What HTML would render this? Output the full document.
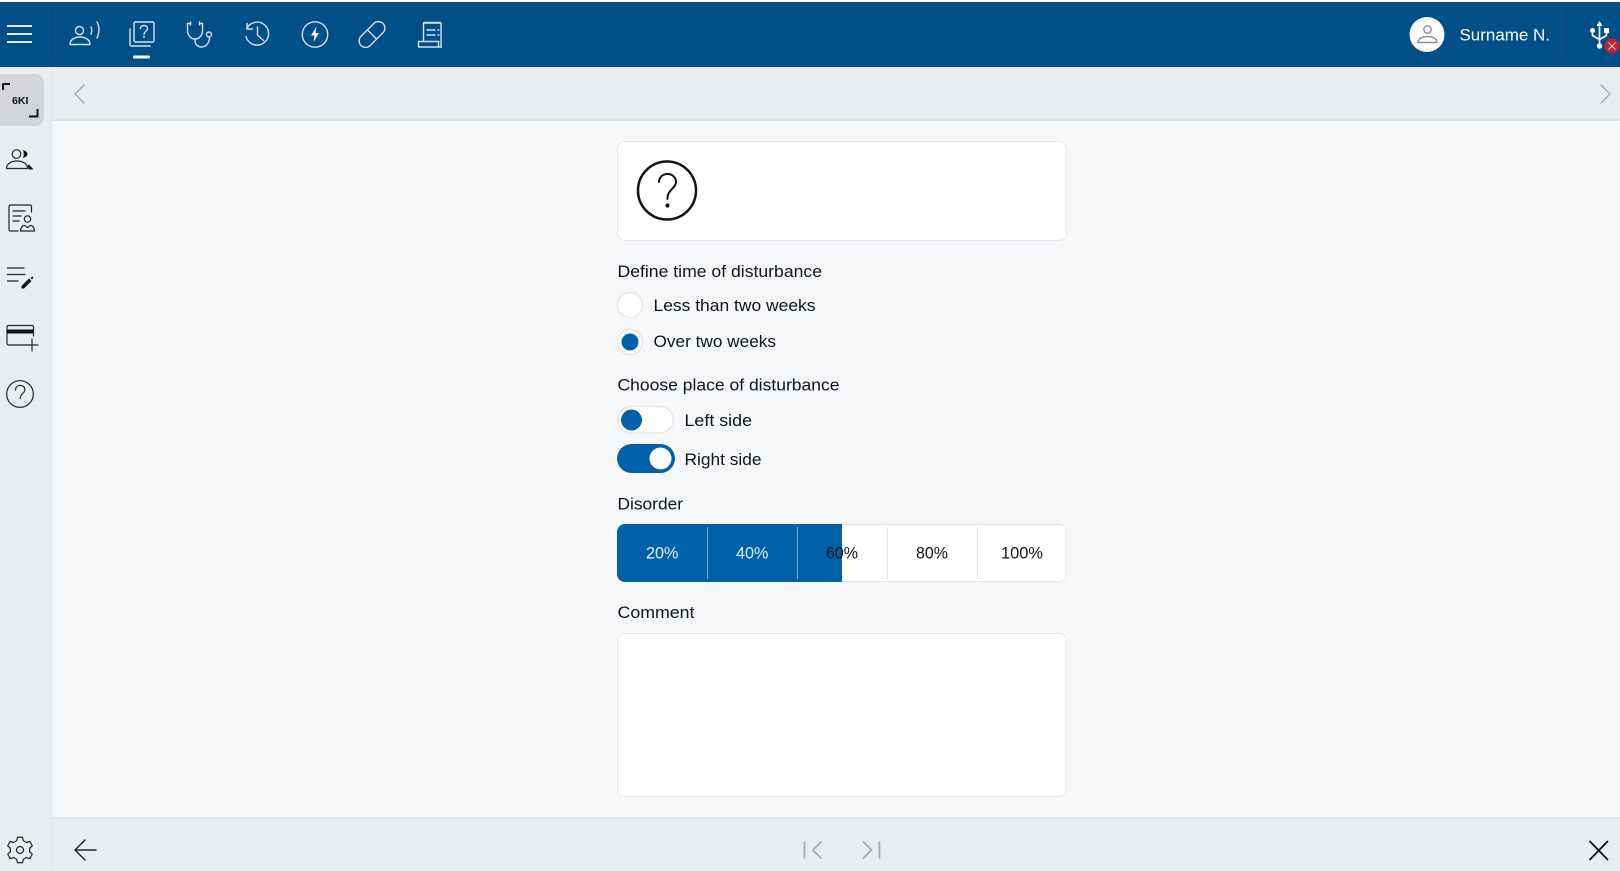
<!DOCTYPE html>
<html lang="en"><head><meta charset="utf-8"><title>Surname N.</title>
<style>
html,body{margin:0;padding:0;width:1620px;height:871px;overflow:hidden;background:#f6f7f9;font-family:"Liberation Sans",sans-serif;color:#101418}
div{position:absolute;box-sizing:border-box}
svg{position:absolute;left:0;top:0}
.box{background:#fff;border:1.5px solid #e4e7eb;border-radius:8px}
</style></head><body>
<div style="left:0;top:0;width:1620px;height:2px;background:#fff"></div>
<div style="left:0;top:2px;width:1620px;height:65px;background:#014f88"></div>
<div style="left:0;top:67px;width:52px;height:804px;background:#e9edf0;border-right:1px solid #e2e5e9"></div>
<div style="left:52px;top:67px;width:1568px;height:54px;background:#e9edf0;border-bottom:2px solid #e0e3e7"></div>
<div style="left:52px;top:817px;width:1568px;height:54px;background:#e9edf0;border-top:1px solid #dfe2e6"></div>
<div style="left:0;top:74px;width:44px;height:52px;background:#d4d5d9;border-radius:0 9px 9px 0"></div>
<div class="box" style="left:617px;top:141px;width:450px;height:100px"></div>
<div class="box" style="left:617px;top:524px;width:450px;height:58px"></div>
<div style="left:617px;top:524px;width:225px;height:58px;background:#0060a8;border-radius:8px 0 0 8px"></div>
<div class="box" style="left:617px;top:633px;width:450px;height:164px"></div>
<svg width="1620" height="871" viewBox="0 0 1620 871" xmlns="http://www.w3.org/2000/svg">
<g font-family="Liberation Sans, sans-serif" font-size="16.5" fill="#101418">
<text x="617.5" y="277" textLength="204.5" lengthAdjust="spacingAndGlyphs">Define time of disturbance</text>
<text x="653.5" y="311" textLength="162" lengthAdjust="spacingAndGlyphs">Less than two weeks</text>
<text x="653.5" y="347" textLength="122.5" lengthAdjust="spacingAndGlyphs">Over two weeks</text>
<text x="617.5" y="390.500" textLength="222" lengthAdjust="spacingAndGlyphs">Choose place of disturbance</text>
<text x="684.500" y="426" textLength="67.500" lengthAdjust="spacingAndGlyphs">Left side</text>
<text x="684.500" y="465" textLength="77" lengthAdjust="spacingAndGlyphs">Right side</text>
<text x="617.500" y="509.500" textLength="65.500" lengthAdjust="spacingAndGlyphs">Disorder</text>
<text x="617.500" y="618" textLength="77" lengthAdjust="spacingAndGlyphs">Comment</text>
<text x="646" y="558.500" fill="#e6eff7" textLength="32.500" lengthAdjust="spacingAndGlyphs">20%</text>
<text x="736" y="558.500" fill="#e6eff7" textLength="32.500" lengthAdjust="spacingAndGlyphs">40%</text>
<text x="826" y="558.500" textLength="32" lengthAdjust="spacingAndGlyphs">60%</text>
<text x="916" y="558.500" textLength="32" lengthAdjust="spacingAndGlyphs">80%</text>
<text x="1001" y="558.500" textLength="42" lengthAdjust="spacingAndGlyphs">100%</text>
<text x="1459.500" y="40.500" fill="#fff" textLength="90.500" lengthAdjust="spacingAndGlyphs">Surname N.</text>
<text x="12" y="104" font-size="10.500" font-weight="bold" textLength="16.500" lengthAdjust="spacingAndGlyphs">6KI</text>
</g>
<path d="M707.500 527V579M797.500 527V579" stroke="#7aa7cf" stroke-width="1"/>
<path d="M887.500 527V579M977.500 527V579" stroke="#e2e5e9" stroke-width="1"/>
<circle cx="630" cy="305" r="12.500" fill="#fff" stroke="#e4e7eb" stroke-width="1.500"/>
<circle cx="630" cy="342" r="12.500" fill="#fff" stroke="#e4e7eb" stroke-width="1.500"/>
<circle cx="630" cy="342" r="8.500" fill="#0060a8"/>
<rect x="617.800" y="406.500" width="55.500" height="26.500" rx="13.250" fill="#fff" stroke="#e4e7eb" stroke-width="1.500"/>
<circle cx="631.500" cy="420" r="10.500" fill="#0060a8"/>
<rect x="617" y="444" width="58" height="29" rx="14.500" fill="#0060a8"/>
<circle cx="660.500" cy="458.500" r="11" fill="#fff"/>
<g fill="none" stroke="#101418" stroke-width="2.500" stroke-linecap="round">
<circle cx="667" cy="190.500" r="29"/>
<path d="M659 182c0-5 4-8 8.500-8 4.700 0 8.500 3.300 8.500 8 0 6-8.500 8-8.500 16v1" stroke-width="2"/>
</g>
<circle cx="667.500" cy="205.500" r="2.100" fill="#101418"/>
<path d="M7 26H32M7 34H32M7 42H32" fill="none" stroke="#fff" stroke-width="1.800"/>
<path d="M51.500 9V59M1566.500 9V59" stroke="#0c4273" stroke-width="1"/>
<g fill="none" stroke="#d5e1ec" stroke-width="1.400" stroke-linecap="round" stroke-linejoin="round">
<circle cx="79.500" cy="30.500" r="4"/>
<path d="M70 44.500c0-5 5-7.500 10-7.500s10 2.500 10 7.500z"/>
<path d="M91 27c1 2 1 5 0 7M97 22c2.500 4.500 2.500 11 0 16"/>
<rect x="134" y="22" width="20" height="20" rx="1.500"/>
<path d="M130 29v15.500a1.500 1.500 0 0 0 1.500 1.500H150"/>
<path d="M140.500 28.500c0-2 1.500-3 3.500-3s3.500 1 3.500 3c0 2.500-3.500 3-3.500 6"/>
<path d="M190.500 23.500h-3v7c0 5 3.500 8.500 7.500 8.500s7.500-3.500 7.500-8.500v-7h-3M190.500 22v3M199.500 22v3"/>
<path d="M195 39v1.500c0 4 3 6.500 6.500 6.500s8-3 8-10"/>
<circle cx="209" cy="34.500" r="2.500"/>
<path d="M246.800 28.500A11.500 11.500 0 1 1 246 36.500M247 23.500v5.500h5.500M257.500 27v8l6 5.500"/>
<circle cx="315" cy="34.500" r="12.700"/>
<g transform="rotate(-45 372 34.500)"><rect x="356.500" y="28" width="31" height="13" rx="6.500"/><path d="M372 28v13"/></g>
<path d="M423.500 41V23h17.500v24M418.500 41.500h20.500M418.500 41.500v5.500h23M438.500 41.500v5.500"/>
<path d="M427 30h8M427 35h8M438 30h1M438 35h1M424 22.500h16"/>
</g>
<circle cx="144" cy="37" r="1" fill="#d5e1ec"/>
<path d="M316.500 26.500l-5.500 9h3.500l-1 6.500 5.500-9h-3.500z" fill="#fff"/>
<rect x="133" y="55.500" width="17" height="3" rx="1.500" fill="#fff"/>
<circle cx="1427" cy="34.500" r="17.500" fill="#fff"/>
<g fill="none" stroke="#8d9298" stroke-width="1.500">
<circle cx="1427.500" cy="29.500" r="3.700"/>
<path d="M1418 42.500c0-4 4.500-6 9.500-6s9.500 2 9.500 6z"/>
</g>
<g fill="none" stroke="#fff" stroke-width="1.700">
<path d="M1599.500 26V46M1592.500 31v4.500l7 4 7-4V31"/>
</g>
<path d="M1599.500 21l-3 5h6z" fill="#fff"/>
<circle cx="1592.500" cy="30.500" r="2.500" fill="#fff"/>
<rect x="1604" y="28" width="5" height="5" fill="#fff"/>
<circle cx="1599.500" cy="46" r="2.700" fill="#fff"/>
<circle cx="1612" cy="46" r="7.500" fill="#c5202f"/>
<path d="M1608.500 42.500l7 7M1615.500 42.500l-7 7" stroke="#f4c6ca" stroke-width="1.200"/>
<g fill="none" stroke="#22272c" stroke-width="1.200" stroke-linecap="round" stroke-linejoin="round">
<path d="M3 90V84h7M37.500 109v7.500H29" stroke="#101418" stroke-width="2" stroke-linecap="butt"/>
<circle cx="16.500" cy="154" r="4.300"/>
<path d="M6.500 168.500c0-5 5-7.500 10.500-7.500s10.500 2.500 10.500 7.500z"/>
<path d="M9 229.500v-23a1.500 1.500 0 0 1 1.500-1.500H30a1.500 1.500 0 0 1 1.500 1.500V212M9 229.500a1.500 1.500 0 0 0 1.500 1.500H18"/>
<path d="M13 211h12M13 216h8M13 221h6"/>
<circle cx="27.500" cy="219" r="3.200"/>
<path d="M20.500 231c0-3 2-5.500 3.500-5.500 2 0 2.500 2 3.500 2s1.500-2 3.500-2c1.500 0 3.500 2.500 3.500 5.500z"/>
<path d="M7.500 268H24M7.500 274.500H25M7.500 281H18"/>
<path d="M7 343.500V327a1.500 1.500 0 0 1 1.500-1.500H32a1.500 1.500 0 0 1 1.500 1.500V336M7 343.500a1.500 1.500 0 0 0 1.500 1.500H26M32 339v12M26 345H38"/>
<circle cx="20" cy="394" r="13.300"/>
<path d="M15.500 390c0-3 2-4.700 4.700-4.700 2.800 0 4.700 2 4.700 4.400 0 3.300-4.700 4.100-4.700 8.800"/>
<path transform="translate(20 850)" d="M-3.350-9.210L-2.480-12.760L2.480-12.760L3.350-9.210L6.300-7.510L9.810-8.530L12.290-4.230L9.650-1.700L9.650 1.700L12.290 4.230L9.810 8.530L6.300 7.510L3.350 9.210L2.480 12.760L-2.480 12.760L-3.350 9.210L-6.300 7.510L-9.810 8.530L-12.290 4.230L-9.650 1.700L-9.650-1.700L-12.290-4.230L-9.810-8.530L-6.300-7.510Z"/>
<circle cx="20" cy="850" r="3.500"/>
<path d="M96 850H75.500M85 840l-10 10 10 10" stroke-width="1.500"/>
<path d="M1590 841.500l17.500 18M1607.500 841.500l-17.500 18" stroke="#101418" stroke-width="1.800"/>
</g>
<path d="M23 150c3 1 4.500 2.500 4.500 4s-1.500 3-4.500 4c1-2.500 1-5.500 0-8zM29 164.500l4.500 5h-5c0-1.500-.5-3-1.500-3.500z" fill="#101418"/>
<rect x="7" y="329.500" width="26.500" height="4" fill="#101418"/>
<path d="M21.500 288.500v-2.500l7.500-7.500 2.500 2.500-7.500 7.500z" fill="#101418"/>
<path d="M30.500 278l2-1.500 1 1-1.500 2z" fill="#101418"/>
<g fill="none" stroke="#a5a8ad" stroke-width="1.400" stroke-linecap="round" stroke-linejoin="round">
<path d="M84 85l-9 9 9 9M1601 85l9 9-9 9"/>
<path d="M804.500 842V858M821 842l-8 8 8 8M863.500 842l8 8-8 8M879.500 842V858" stroke-width="1.700"/>
</g>
</svg>
</body></html>
